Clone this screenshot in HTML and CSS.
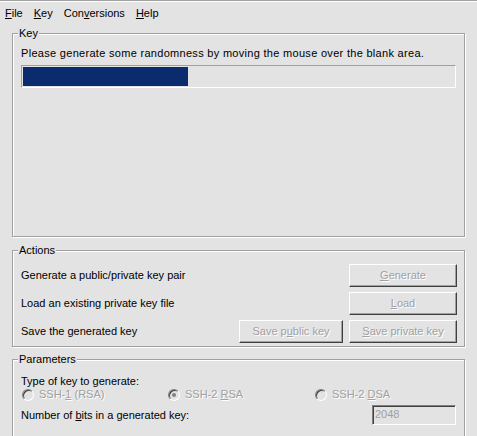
FILE: index.html
```html
<!DOCTYPE html>
<html lang="en">
<head>
  <meta charset="UTF-8">
  <title>PuTTY Key Generator</title>
  <link rel="stylesheet" href="styles.css">
</head>
<body>

  <div class="menubar">
    <span class="menu-item"><u>F</u>ile</span>
    <span class="menu-item"><u>K</u>ey</span>
    <span class="menu-item">Con<u>v</u>ersions</span>
    <span class="menu-item"><u>H</u>elp</span>
  </div>

  <div class="content">

    <div class="group key-group">
      <span class="group-title">Key</span>
      <div class="hint">Please generate some randomness by moving the mouse over the blank area.</div>
      <div class="progress">
        <div class="progress-fill" style="width: 165px"></div>
      </div>
    </div>

    <div class="group actions-group">
      <span class="group-title">Actions</span>
      <div class="action-row">
        <span class="action-label">Generate a public/private key pair</span>
        <button class="btn" disabled><u>G</u>enerate</button>
      </div>
      <div class="action-row">
        <span class="action-label">Load an existing private key file</span>
        <button class="btn" disabled><u>L</u>oad</button>
      </div>
      <div class="action-row">
        <span class="action-label">Save the generated key</span>
        <button class="btn btn-public" disabled>Save p<u>u</u>blic key</button>
        <button class="btn" disabled><u>S</u>ave private key</button>
      </div>
    </div>

    <div class="group params-group">
      <span class="group-title">Parameters</span>
      <div class="param-text">Type of key to generate:</div>
      <div class="radio-row">
        <label class="radio"><span class="radio-dot"></span><span>SSH-<u>1</u> (RSA)</span></label>
        <label class="radio"><span class="radio-dot checked"></span><span>SSH-2 <u>R</u>SA</span></label>
        <label class="radio"><span class="radio-dot"></span><span>SSH-2 <u>D</u>SA</span></label>
      </div>
      <div class="bits-row">
        <span class="param-text">Number of <u>b</u>its in a generated key:</span>
        <span class="bits-input">2048</span>
      </div>
    </div>

  </div>

</body>
</html>
```

FILE: styles.css
```css
* {
  box-sizing: border-box;
}

body {
  margin: 0;
  height: 436px;
  overflow: hidden;
  background: #e3e3e3;
  font-family: 'Liberation Sans', Arial, sans-serif;
  font-size: 11px;
  line-height: 13px;
  color: #000;
}

u {
  text-underline-offset: 1px;
}

/* Menu bar */
.menubar {
  display: flex;
  gap: 11px;
  height: 25px;
  padding: 0 0 0 5px;
  align-items: center;
  border-top: 1px solid #a0a0a0;
  box-shadow: inset 0 1px 0 #fff;
  margin-bottom: 8px;
}

.content {
  padding: 0 12px;
}

/* Etched group boxes */
.group {
  position: relative;
  border: 1px solid #a0a0a0;
  box-shadow: inset 1px 1px 0 #fff, 1px 1px 0 #fff;
  padding: 0 7px 0 8px;
}

.group-title {
  position: absolute;
  top: -7px;
  left: 5px;
  padding: 0 1px;
  background: #e3e3e3;
}

.key-group {
  height: 204px;
  padding-top: 13px;
  padding-right: 8px;
}

.hint {
  letter-spacing: 0.3px;
}

.progress {
  margin-top: 5px;
  height: 23px;
  padding: 1px;
  border: 1px solid;
  border-color: #a0a0a0 #fff #fff #a0a0a0;
}

.progress-fill {
  height: 100%;
  background: #0a2b6e;
}

/* Actions */
.actions-group {
  margin-top: 13px;
  padding-top: 13px;
  padding-bottom: 3px;
  display: flex;
  flex-direction: column;
  gap: 5px;
}

.action-row {
  display: flex;
  align-items: center;
  gap: 6px;
}

.action-label {
  flex: 1;
}

.btn {
  width: 108px;
  height: 23px;
  padding: 0;
  font: inherit;
  color: #a0a0a0;
  text-shadow: 1px 1px 0 #fff;
  background: #e3e3e3;
  border: 1px solid;
  border-color: #fff #404040 #404040 #fff;
  box-shadow: inset -1px -1px 0 #a0a0a0;
}

.btn-public {
  width: 104px;
}

/* Parameters */
.params-group {
  margin-top: 12px;
  height: 200px;
  padding-top: 15px;
}

.radio-row {
  display: grid;
  grid-template-columns: 146px 147px 1fr;
}

.radio {
  display: flex;
  align-items: center;
  color: #a0a0a0;
  text-shadow: 1px 1px 0 #fff;
}

.radio-dot {
  width: 12px;
  height: 12px;
  margin: 0 5px 0 1px;
  border-radius: 50%;
  border: 1px solid;
  border-color: #808080 #fff #fff #808080;
  box-shadow: inset 1px 1px 0 #404040;
  position: relative;
}

.radio-dot.checked::after {
  content: "";
  position: absolute;
  left: 3px;
  top: 3px;
  width: 4px;
  height: 4px;
  border-radius: 50%;
  background: #808080;
}

.bits-row {
  display: flex;
  align-items: center;
  justify-content: space-between;
  margin-top: 4px;
  padding-right: 1px;
}

.bits-input {
  width: 84px;
  height: 20px;
  padding: 2px 0 0 2px;
  color: #a0a0a0;
  border: 1px solid;
  border-color: #808080 #fff #fff #808080;
  box-shadow: inset 1px 1px 0 #404040;
}
```
